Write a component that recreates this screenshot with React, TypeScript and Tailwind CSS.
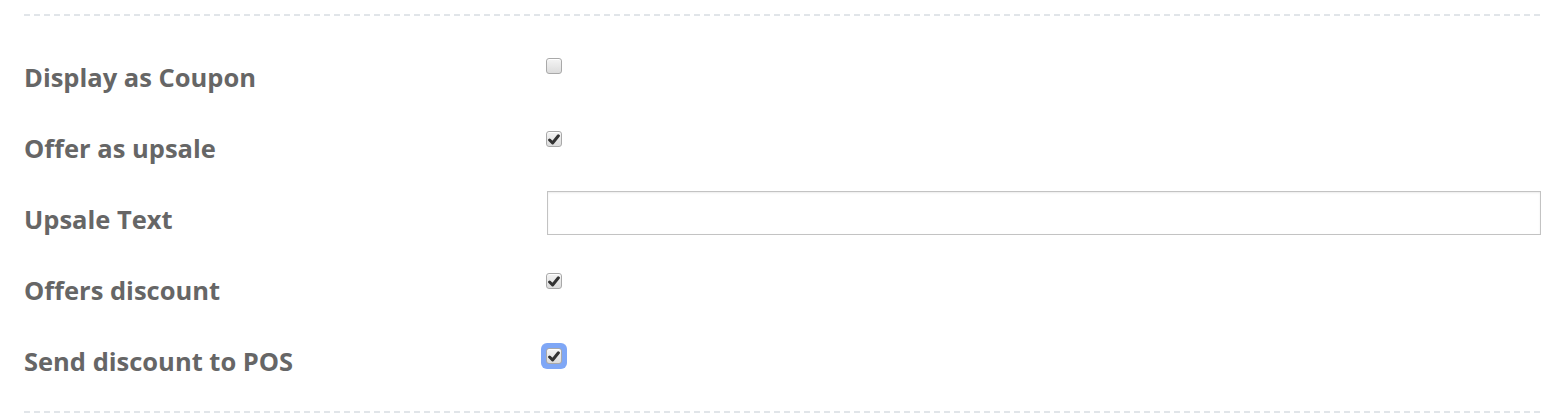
import React from "react";

function Dashed() {
  return (
    <div className="h-[2px] w-full bg-[repeating-linear-gradient(90deg,#e1e5e9_0px,#e1e5e9_6px,transparent_6px,transparent_10px)]" />
  );
}

function Check({ checked, focused }: { checked?: boolean; focused?: boolean }) {
  const box = (
    <div className="flex h-[16px] w-[16px] items-center justify-center rounded-[3px] border border-[#a9a9a9] bg-[linear-gradient(180deg,#f4f4f4,#dcdcdc)] shadow-[inset_0_1px_0_#fff]">
      {checked && (
        <svg width="12" height="11" viewBox="0 0 12 11">
          <path d="M1.6 6 L4.6 9 L10.4 1.8" fill="none" stroke="#333" strokeWidth="3" strokeLinecap="round" strokeLinejoin="round" />
        </svg>
      )}
    </div>
  );
  if (focused) {
    return <div className="w-fit rounded-[6px] bg-[#7fa7f6] p-[5px]">{box}</div>;
  }
  return <div className="w-fit">{box}</div>;
}

function Row({ label, children, ctrlTop }: { label: string; children: React.ReactNode; ctrlTop: string }) {
  return (
    <div className="flex h-[71px]">
      <div className="w-[522px] shrink-0 pt-[21px] text-[25.5px] font-bold leading-[30px] text-[#666666]">{label}</div>
      <div className={`flex-1 ${ctrlTop}`}>{children}</div>
    </div>
  );
}

export default function App() {
  return (
    <div className="h-[420px] w-[1568px] bg-white pl-[24px] pr-[26px] pt-[14px] [font-family:'Open_Sans',sans-serif]">
      <Dashed />
      <div className="pt-[25px]">
        <Row label="Display as Coupon" ctrlTop="pt-[17px]">
          <Check />
        </Row>
        <Row label="Offer as upsale" ctrlTop="pt-[19px]">
          <Check checked />
        </Row>
        <Row label="Upsale Text" ctrlTop="pt-[8px]">
          <input
            type="text"
            className="ml-[1px] block h-[44px] w-[994px] border border-[#c3c3c3] bg-white shadow-[inset_0_1px_2px_rgba(0,0,0,0.08)] outline-none"
          />
        </Row>
        <Row label="Offers discount" ctrlTop="pt-[19px]">
          <Check checked />
        </Row>
        <Row label="Send discount to POS" ctrlTop="pt-[18px] -ml-[5px]">
          <Check checked focused />
        </Row>
      </div>
      <div className="pt-[15px]">
        <Dashed />
      </div>
    </div>
  );
}
